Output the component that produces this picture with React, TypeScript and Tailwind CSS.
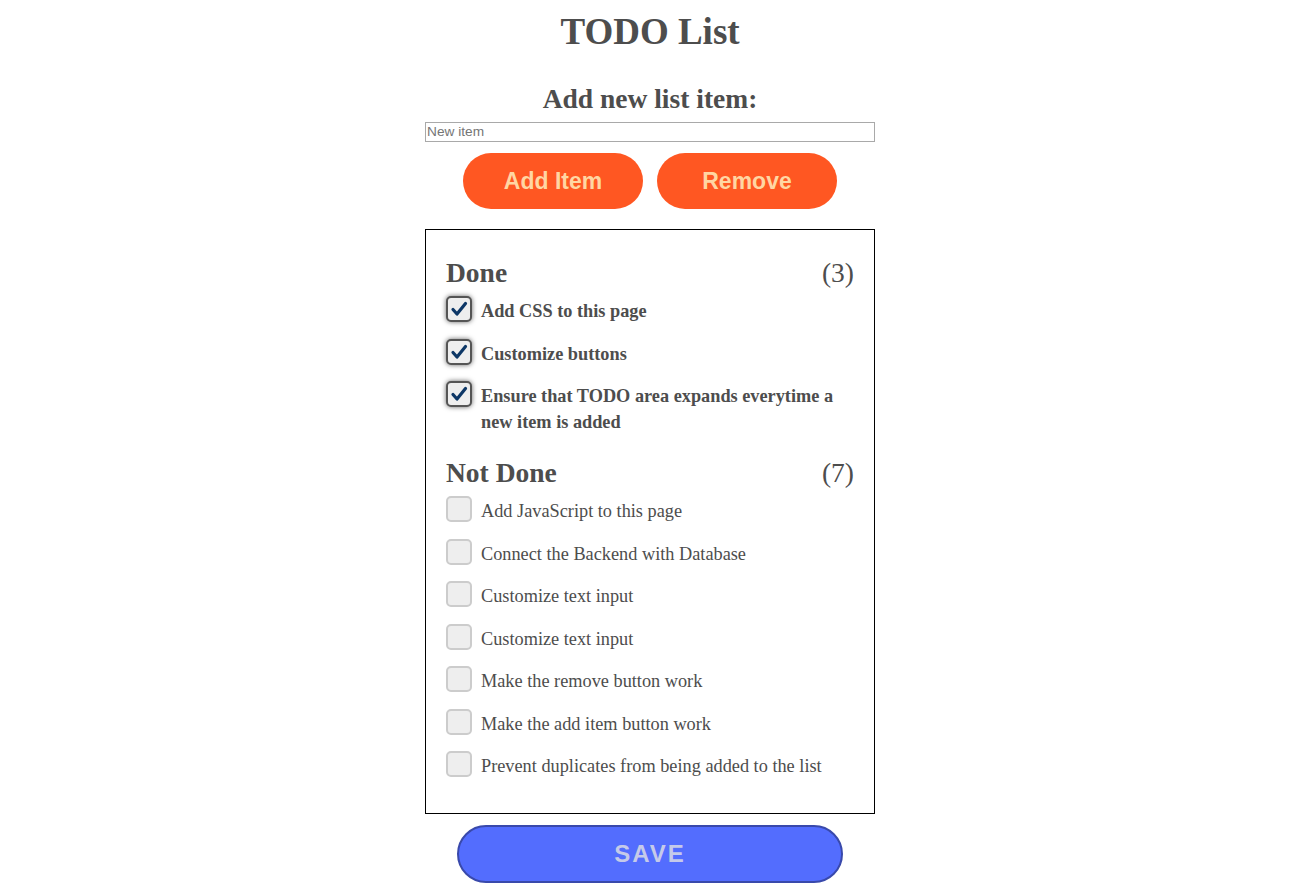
import React, { useState } from 'react';

type Item = { id: number; text: string; done: boolean };

const initialItems: Item[] = [
  { id: 1, text: 'Add CSS to this page', done: true },
  { id: 2, text: 'Customize buttons', done: true },
  { id: 3, text: 'Ensure that TODO area expands everytime a new item is added', done: true },
  { id: 4, text: 'Add JavaScript to this page', done: false },
  { id: 5, text: 'Connect the Backend with Database', done: false },
  { id: 6, text: 'Customize text input', done: false },
  { id: 7, text: 'Customize text input', done: false },
  { id: 8, text: 'Make the remove button work', done: false },
  { id: 9, text: 'Make the add item button work', done: false },
  { id: 10, text: 'Prevent duplicates from being added to the list', done: false },
];

const serif = { fontFamily: '"Liberation Serif", "Times New Roman", serif' };
const sans = { fontFamily: '"Liberation Sans", Arial, sans-serif' };

const Checkbox = ({ checked, onClick }: { checked: boolean; onClick: () => void }) => (
  <button
    onClick={onClick}
    className={
      checked
        ? 'shrink-0 w-[26px] h-[26px] rounded-[5px] bg-[#eeeeee] border-2 border-[#555555] shadow-[0_0_5px_rgba(0,0,0,0.6)] flex items-center justify-center'
        : 'shrink-0 w-[26px] h-[26px] rounded-[5px] bg-[#eeeeee] border-2 border-[#cccccc] flex items-center justify-center'
    }
  >
    {checked && (
      <svg width="18" height="18" viewBox="0 0 18 18">
        <path d="M3 9.5 L7 14 L15.5 3.5" fill="none" stroke="#0d3766" strokeWidth="3.2" strokeLinecap="round" strokeLinejoin="round" />
      </svg>
    )}
  </button>
);

const Section = ({ title, items, onToggle }: { title: string; items: Item[]; onToggle: (id: number) => void }) => (
  <div>
    <div className="flex items-center justify-between h-[30px] mb-[8px]">
      <h3 className="text-[27.5px] font-bold text-[#4d4d4d]">{title}</h3>
      <span className="text-[27.5px] text-[#4d4d4d]">({items.length})</span>
    </div>
    <div className="flex flex-col gap-y-[16.5px]">
      {items.map(item => (
        <div key={item.id} className="flex items-start gap-[9px]">
          <Checkbox checked={item.done} onClick={() => onToggle(item.id)} />
          <span
            className={
              item.done
                ? 'text-[18.3px] leading-[26px] font-bold text-[#4d4d4d] pt-[2px] -mb-[2px]'
                : 'text-[18.3px] leading-[26px] text-[#4d4d4d] pt-[2px] -mb-[2px]'
            }
          >
            {item.text}
          </span>
        </div>
      ))}
    </div>
  </div>
);

export default function App() {
  const [items, setItems] = useState<Item[]>(initialItems);
  const [text, setText] = useState('');

  const toggle = (id: number) =>
    setItems(prev => prev.map(i => (i.id === id ? { ...i, done: !i.done } : i)));

  const done = items.filter(i => i.done);
  const notDone = items.filter(i => !i.done);

  return (
    <div className="min-h-screen bg-white" style={serif}>
      <div className="w-[450px] mx-auto flex flex-col items-center">
        <h1 className="text-[37px] leading-[46px] font-bold text-[#4d4d4d] mt-[9px]">TODO List</h1>
        <h2 className="text-[27.5px] leading-[32px] font-bold text-[#4d4d4d] mt-[28px] mb-[7px]">Add new list item:</h2>
        <input
          value={text}
          onChange={e => setText(e.target.value)}
          placeholder="New item"
          className="w-full h-[20px] border border-[#a9a9a9] px-[1px] text-[13.7px] text-[#333] placeholder:text-[#757575] outline-none"
          style={sans}
        />
        <div className="flex gap-[14px] mt-[11px]">
          <button
            className="w-[180px] h-[56px] rounded-full bg-[#ff5722] text-[#ffd6a3] text-[23px] font-bold"
            style={sans}
          >
            Add Item
          </button>
          <button
            className="w-[180px] h-[56px] rounded-full bg-[#ff5722] text-[#ffd6a3] text-[23px] font-bold"
            style={sans}
          >
            Remove
          </button>
        </div>
        <div className="w-full border border-black mt-[20px] px-[20px] pt-[28px] pb-[36px] flex flex-col gap-[25px]">
          <Section title="Done" items={done} onToggle={toggle} />
          <Section title="Not Done" items={notDone} onToggle={toggle} />
        </div>
        <button
          className="w-[386px] h-[58px] mt-[11px] rounded-full bg-[#536dfe] border-2 border-[#3949ab] text-[#c5cae9] text-[24px] font-bold tracking-[2px]"
          style={sans}
        >
          SAVE
        </button>
      </div>
    </div>
  );
}
